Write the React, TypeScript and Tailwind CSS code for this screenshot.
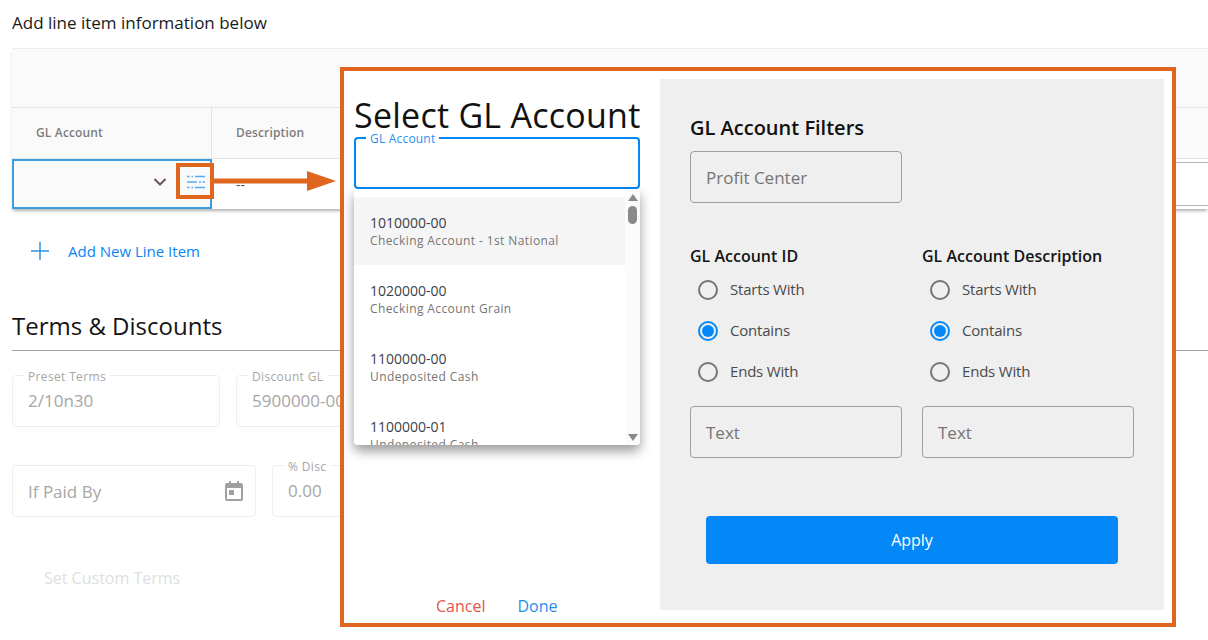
import React from 'react';

const accounts = [
  { id: '1010000-00', name: 'Checking Account - 1st National', active: true },
  { id: '1020000-00', name: 'Checking Account Grain' },
  { id: '1100000-00', name: 'Undeposited Cash' },
  { id: '1100000-01', name: 'Undeposited Cash' },
];

function Radio({ label, checked }: { label: string; checked?: boolean }) {
  return (
    <div className="flex h-[41px] items-center gap-[12px] pl-[8px]">
      {checked ? (
        <span className="flex h-[20px] w-[20px] items-center justify-center rounded-full border-2 border-[#0488f7]">
          <span className="h-[12px] w-[12px] rounded-full bg-[#0488f7]" />
        </span>
      ) : (
        <span className="h-[20px] w-[20px] rounded-full border-2 border-[#757575]" />
      )}
      <span className="text-[15px] tracking-[-0.2px] text-[#4a4a4a]">{label}</span>
    </div>
  );
}

function FilterColumn({ title }: { title: string }) {
  return (
    <div className="w-[212px]">
      <div className="mb-[2px] text-[16px] leading-[22px] font-semibold text-[#141414]">{title}</div>
      <Radio label="Starts With" />
      <Radio label="Contains" checked />
      <Radio label="Ends With" />
      <div className="mt-[14px] flex h-[52px] items-center rounded-[4px] border border-[#9e9e9e] pt-[2px] pl-[15px] text-[17px] text-[#757575]">
        Text
      </div>
    </div>
  );
}

function FadedField({ label, value, className }: { label: string; value: string; className: string }) {
  return (
    <div className={`relative flex h-[52px] items-center rounded-[4px] border border-[#eeeeee] pl-[15px] text-[17px] text-[#a6a6a6] ${className}`}>
      <span className="absolute top-[-6px] left-[11px] bg-white px-[4px] text-[12px] leading-[13px] tracking-[0.35px] text-[#a6a6a6]">{label}</span>
      <span>{value}</span>
    </div>
  );
}

export default function App() {
  return (
    <div className="relative h-[640px] w-[1208px] overflow-hidden bg-white font-['Open_Sans',sans-serif]">
      {/* Page behind the modal */}
      <div className="pt-[12px] pl-[12px]">
        <div className="text-[17px] leading-[22px] text-[#1a1a1a]">Add line item information below</div>

        <div className="mt-[14px] border-t border-[#ececec] bg-[#fafafa] shadow-[0_3px_3px_-1px_rgba(0,0,0,0.3)]">
          <div className="h-[59px] border-b border-[#e4e4e4]" />
          <div className="flex h-[51px] border-b border-[#e4e4e4] text-[12px] font-semibold tracking-[0.15px] text-[#7d7d7d]">
            <div className="flex w-[200px] items-center border-r border-[#e4e4e4] pl-[24px]">GL Account</div>
            <div className="flex items-center pl-[24px]">Description</div>
          </div>
          <div className="flex h-[50px] bg-white">
            <div className="flex w-[200px] shrink-0 items-center justify-end border-2 border-[#3d9be0] bg-[#fafafa] pr-[3px] pb-[4px]">
              <svg width="14" height="10" viewBox="0 0 14 10" className="mr-[19px]" fill="none">
                <path d="M1.5 2 7 7.5 12.5 2" stroke="#6b5a50" strokeWidth="2" />
              </svg>
              <svg width="20" height="16" viewBox="0 0 20 16" className="mr-[1px]" fill="none" stroke="#5aaaf2" strokeWidth="1.6">
                <path d="M1 2.5h2.5M5.5 2.5H7M9 2.5h10M1 8h10M13 8h2M16.5 8H19M1 13.5h2.5M5.5 13.5H7M9 13.5h10" />
              </svg>
            </div>
            <div className="pt-[16px] pl-[24px] text-[14px] leading-[20px] text-[#555555]">--</div>
            <div className="mt-[3px] ml-auto h-[44px] w-[200px] border-y border-[#b5b5b5]" />
          </div>
        </div>

        <div className="mt-[29px] flex h-[26px] items-center pl-[19px] text-[15px] text-[#0a84f5]">
          <svg width="18" height="18" viewBox="0 0 18 18" fill="none" stroke="#2f93e8" strokeWidth="1.5">
            <path d="M9 0v18M0 9h18" />
          </svg>
          <span className="ml-[19px]">Add New Line Item</span>
        </div>

        <div className="mt-[45px] border-b border-[#a3a3a3] pb-[8px] text-[24px] leading-[33px] text-[#141414]">Terms &amp; Discounts</div>

        <div className="mt-[24px] flex gap-[16px]">
          <FadedField label="Preset Terms" value="2/10n30" className="w-[208px]" />
          <FadedField label="Discount GL" value="5900000-00" className="w-[200px]" />
        </div>

        <div className="mt-[38px] flex gap-[16px]">
          <div className="flex h-[52px] w-[244px] items-center justify-between rounded-[4px] border border-[#eeeeee] pr-[12px] pl-[15px] text-[17px] text-[#a6a6a6]">
            <span className="pt-[2px]">If Paid By</span>
            <svg width="18" height="20" viewBox="0 0 18 20" fill="#a0a0a0">
              <path d="M4 0h2v2h6V0h2v2h2a2 2 0 0 1 2 2v14a2 2 0 0 1-2 2H2a2 2 0 0 1-2-2V4a2 2 0 0 1 2-2h2V0Zm-2 7v11h14V7H2Zm2 2h5v5H4V9Z" />
            </svg>
          </div>
          <FadedField label="% Disc" value="0.00" className="w-[120px]" />
        </div>

        <div className="mt-[50px] pl-[32px] text-[16px] leading-[22px] text-[#dcdfe3]">Set Custom Terms</div>
      </div>

      {/* Callout marks */}
      <div className="absolute top-[163px] left-[176px] h-[36px] w-[38px] border-4 border-[#e0651f]" />
      <svg className="absolute top-[171px] left-[214px]" width="124" height="20" viewBox="0 0 124 20">
        <path d="M0 7.5h93V0l29 10-29 10v-7.5H0Z" fill="#e0651f" />
      </svg>

      {/* Modal */}
      <div className="absolute top-[67px] left-[340px] flex h-[560px] w-[836px] border-4 border-[#e0651f] bg-white pt-[8px] pr-[8px] pb-[13px]">
        <div className="relative w-[316px] shrink-0 pl-[10px]">
          <div className="mt-[14px] h-[44px] text-[34px] leading-[44px] tracking-[0.25px] whitespace-nowrap text-[#111111]">Select GL Account</div>
          <div className="relative h-[52px] w-[286px] rounded-[4px] border-2 border-[#0488f7]">
            <span className="absolute top-[-7px] left-[10px] bg-white px-[4px] text-[12px] leading-[14px] tracking-[0.2px] text-[#2a92ee]">GL Account</span>
          </div>
          <div className="relative h-[256px] w-[286px] overflow-hidden rounded-b-[4px] bg-white pt-[8px] shadow-[0_6px_12px_rgba(0,0,0,0.4)]">
            <div className="w-[271px]">
              {accounts.map((a) => (
                <div key={a.id} className={`h-[68px] pt-[16px] pl-[16px] ${a.active ? 'bg-[#f5f5f5]' : 'bg-white'}`}>
                  <div className="text-[14px] leading-[20px] text-[#3a3f47]">{a.id}</div>
                  <div className="text-[12px] leading-[16px] tracking-[0.4px] text-[#757575]">{a.name}</div>
                </div>
              ))}
            </div>
            <div className="absolute top-0 right-0 flex h-full w-[15px] flex-col items-center bg-[#fbfbfb] pt-[5px]">
              <span className="h-0 w-0 border-x-[5px] border-b-[7px] border-x-transparent border-b-[#8a8a8a]" />
              <span className="mt-[5px] h-[18px] w-[9px] rounded-full bg-[#8a8a8a]" />
              <span className="mt-auto mb-[4px] h-0 w-0 border-x-[5px] border-t-[7px] border-x-transparent border-t-[#8a8a8a]" />
            </div>
          </div>
          <div className="absolute bottom-[-7px] left-[92px] flex gap-[32px] text-[16px] leading-[22px]">
            <span className="text-[#e2574c]">Cancel</span>
            <span className="text-[#1f8ef1]">Done</span>
          </div>
        </div>

        <div className="flex-1 bg-[#efefef] pt-[37px] pl-[30px]">
          <div className="text-[20px] leading-[24px] font-semibold text-[#111111]">GL Account Filters</div>
          <div className="mt-[11px] flex h-[52px] w-[212px] items-center rounded-[4px] border border-[#9e9e9e] pt-[2px] pl-[15px] text-[17px] text-[#757575]">
            Profit Center
          </div>
          <div className="mt-[42px] flex gap-[20px]">
            <FilterColumn title="GL Account ID" />
            <FilterColumn title="GL Account Description" />
          </div>
          <div className="mt-[58px] ml-[16px] flex h-[48px] w-[412px] items-center justify-center rounded-[4px] bg-[#0488f7] text-[16px] text-white">
            Apply
          </div>
        </div>
      </div>
    </div>
  );
}
